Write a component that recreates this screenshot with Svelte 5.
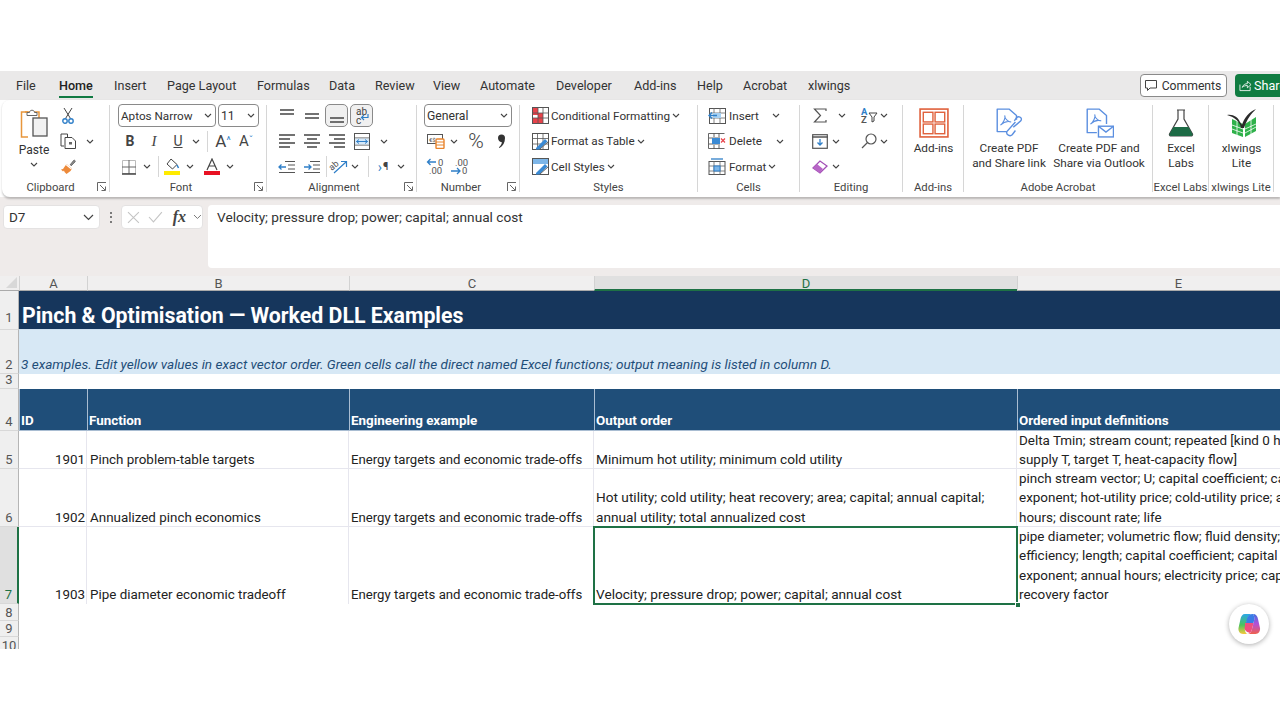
<script>
  const tabs = ['File','Home','Insert','Page Layout','Formulas','Data','Review','View','Automate','Developer','Add-ins','Help','Acrobat','xlwings'];
  const cols = ['A','B','C','D','E'];
  const filler = [8,9,10];
</script>

{#snippet chev()}
  <svg class="chev" width="8" height="5" viewBox="0 0 8 5"><path d="M1 1l3 3 3-3" fill="none" stroke="#444" stroke-width="1.1"/></svg>
{/snippet}
{#snippet launcher()}
  <svg class="launcher" width="10" height="10" viewBox="0 0 10 10"><path d="M.5 9V.5H9M3 3l5 5M8.500 4.500v4h-4" fill="none" stroke="#666"/></svg>
{/snippet}
{#snippet lines(a, b, c, d)}
  <svg width="20" height="18" viewBox="0 0 20 18"><g stroke="#444" stroke-width="1.3"><path d="M{a[0]} 3H{a[1]}M{b[0]} 7H{b[1]}M{c[0]} 11H{c[1]}M{d[0]} 15H{d[1]}"/></g></svg>
{/snippet}

<div class="page">
  <div class="tabs">
    <nav class="tablist">
      {#each tabs as t}
        <span class="tab" class:active={t === 'Home'}>{t}</span>
      {/each}
    </nav>
    <div class="actions">
      <button class="comments">
        <svg width="14" height="13" viewBox="0 0 14 13"><path d="M1.500 1.500h11v7.500H6l-2.500 2.500V9h-2z" fill="none" stroke="#444"/></svg>
        Comments
      </button>
      <button class="share">
        <svg width="13" height="13" viewBox="0 0 14 13"><path d="M1 5.500v6.500h11V8M3.500 8.500C4.500 5.500 7 4.500 9 4.500V2l4 3.500-4 3.500V6.500c-2 0-4 .5-5.500 2z" fill="none" stroke="#fff" stroke-width=".9"/></svg>
        Share
      </button>
    </div>
  </div>

  <div class="ribbon">
    <section class="group g-clip">
      <div class="body">
        <div class="large paste">
          <svg width="30" height="30" viewBox="0 0 30 30"><path d="M9 4H2.500v25H9" fill="#fff" stroke="#e8963c" stroke-width="1.500"/><path d="M6 4h14v6" fill="none" stroke="#e8963c" stroke-width="1.500"/><path d="M8 4.500h2.500c0-3 5-3 5 0H18v3H8z" fill="#fff" stroke="#666"/><rect x="14" y="10" width="14" height="18" fill="#f2f2f2" stroke="#555" stroke-width="1.300"/></svg>
          <span class="btn-text">Paste</span>
          {@render chev()}
        </div>
        <div class="stack">
          <div class="row">
            <span class="c w18"><svg width="12" height="17" viewBox="0 0 12 17"><path d="M2 1l6.500 10.500M10 1L3.500 11.500" stroke="#444" fill="none"/><circle cx="3" cy="14" r="2.200" fill="none" stroke="#2f7fc8" stroke-width="1.400"/><circle cx="9" cy="14" r="2.200" fill="none" stroke="#2f7fc8" stroke-width="1.400"/></svg></span>
          </div>
          <div class="row">
            <span class="c w18"><svg width="17" height="16" viewBox="0 0 17 16"><path d="M4 13H1V1h6.500v3" fill="none" stroke="#444"/><path d="M5 4.500h7l3.500 3.500v7.500H5z" fill="#fff" stroke="#444"/><rect x="9" y="9" width="3" height="2.500" fill="#666"/></svg></span>
            <span class="c w26">{@render chev()}</span>
          </div>
          <div class="row">
            <span class="c w18"><svg width="17" height="16" viewBox="0 0 17 16"><path d="M10 6l3.500-4.500c1-1 2.500.5 1.500 1.500L11 7" fill="#888" stroke="#555" stroke-width=".7"/><path d="M6.500 5l5.500 4.500-1.500 2.500-4 3-2-2-.5-1.500-1 1L1 10.500l2-.5z" fill="#ed8a3a"/><path d="M6 5.500l5.500 4.500" stroke="#fff" stroke-width="1.100"/></svg></span>
          </div>
        </div>
      </div>
      <div class="label">Clipboard</div>
      {@render launcher()}
    </section>

    <section class="group g-font">
      <div class="stack">
        <div class="row combos">
          <div class="combo fontname"><span>Aptos Narrow</span>{@render chev()}</div>
          <div class="combo fontsize"><span>11</span>{@render chev()}</div>
        </div>
        <div class="row">
          <span class="c w24 glyph bold">B</span>
          <span class="c w24 glyph ital">I</span>
          <span class="c w24 glyph under">U</span>
          <span class="c w12">{@render chev()}</span>
          <span class="c w10"><i class="sep"></i></span>
          <span class="c w22 glyph large-a">A<sup class="up">^</sup></span>
          <span class="c w24 glyph small-a">A<sup class="dn">ˇ</sup></span>
        </div>
        <div class="row">
          <span class="c w22"><svg width="16" height="16" viewBox="0 0 16 16"><path d="M1.500 1.500h13v13h-13z" fill="none" stroke="#bbb"/><path d="M8 1v14M1 8h14" stroke="#666"/><path d="M1 15h14" stroke="#444" stroke-width="1.500"/></svg></span>
          <span class="c w14">{@render chev()}</span>
          <span class="c w8"><i class="sep"></i></span>
          <span class="c w20"><svg width="16" height="17" viewBox="0 0 16 17"><path d="M7 1l6 5.500-4.500 4.500L3 6z" fill="#fff" stroke="#444"/><path d="M13 7l1.500 3" stroke="#2f7fc8" stroke-width="1.500"/><rect y="13" width="16" height="4" fill="#ffeb00"/></svg></span>
          <span class="c w16">{@render chev()}</span>
          <span class="c w28"><svg width="16" height="17" viewBox="0 0 16 17"><path d="M3 12L8 1l5 11M5 8h6" fill="none" stroke="#444" stroke-width="1.200"/><rect y="13" width="16" height="4" fill="#e81123"/></svg></span>
          <span class="c w8">{@render chev()}</span>
        </div>
      </div>
      <div class="label">Font</div>
      {@render launcher()}
    </section>

    <section class="group g-align">
      <div class="stack">
        <div class="row">
          <span class="c w25">{@render lines([3,17],[3,17],[30,30],[30,30])}</span>
          <span class="c w25">{@render lines([30,30],[3,17],[3,17],[30,30])}</span>
          <span class="c w25 on">{@render lines([30,30],[30,30],[3,17],[3,17])}</span>
          <span class="c w25 on wrap"><span class="abc">ab<br/>c</span><svg class="wraparrow" width="9" height="8" viewBox="0 0 9 8"><path d="M8 0v3.500H2M4 1L1.500 3.500 4 6" fill="none" stroke="#2f7fc8" stroke-width="1.200"/></svg></span>
        </div>
        <div class="row">
          <span class="c w25">{@render lines([2,18],[2,13],[2,18],[2,13])}</span>
          <span class="c w25">{@render lines([2,18],[5,15],[2,18],[5,15])}</span>
          <span class="c w25">{@render lines([2,18],[7,18],[2,18],[7,18])}</span>
          <span class="c w25"><svg width="16" height="17" viewBox="0 0 16 17"><rect x=".5" y=".5" width="15" height="16" fill="#fff" stroke="#555"/><path d="M0 5h16M0 12h16" stroke="#555"/><rect x="1" y="5.500" width="14" height="6" fill="#d5e8f8"/><path d="M2.500 8.500h11M5 6.500l-2.500 2 2.500 2M11 6.500l2.500 2-2.500 2" fill="none" stroke="#2f7fc8"/></svg></span>
          <span class="c w20">{@render chev()}</span>
        </div>
        <div class="row">
          <span class="c w25"><svg width="20" height="16" viewBox="0 0 20 16"><path d="M8 2.500h10M11 6h7M11 10h7M2 13.500h16" stroke="#555" stroke-width="1.200"/><path d="M9 8H2M4.500 5.500L2 8l2.500 2.500" fill="none" stroke="#2f7fc8" stroke-width="1.300"/></svg></span>
          <span class="c w25"><svg width="20" height="16" viewBox="0 0 20 16"><path d="M8 2.500h10M11 6h7M11 10h7M2 13.500h16" stroke="#555" stroke-width="1.200"/><path d="M2 8h7M6.500 5.500L9 8l-2.500 2.500" fill="none" stroke="#2f7fc8" stroke-width="1.300"/></svg></span>
          <span class="c w4"><i class="sep"></i></span>
          <span class="c w20"><svg width="19" height="17" viewBox="0 0 19 17"><text x="1" y="10" transform="rotate(-40 6 9)" class="svgt">ab</text><path d="M5 15L17 4M12 3.500h5.500V9" fill="none" stroke="#2f7fc8" stroke-width="1.200"/></svg></span>
          <span class="c w14">{@render chev()}</span>
          <span class="c w12"><i class="sep"></i></span>
          <span class="c w18 rtl"><b>›</b>¶</span>
          <span class="c w18">{@render chev()}</span>
        </div>
      </div>
      <div class="label">Alignment</div>
      {@render launcher()}
    </section>

    <section class="group g-num">
      <div class="stack">
        <div class="row"><div class="combo general"><span>General</span>{@render chev()}</div></div>
        <div class="row">
          <span class="c w24"><svg width="18" height="16" viewBox="0 0 18 16"><rect x=".5" y="1.500" width="15" height="9" fill="none" stroke="#555"/><text x="2" y="9" class="svgt tiny">€$</text><rect x="9" y="6" width="8" height="9.500" rx="1" fill="#fff" stroke="#e8842c" stroke-width="1.400"/><path d="M9 9h8M9 12h8" stroke="#e8842c"/></svg></span>
          <span class="c w12">{@render chev()}</span>
          <span class="c w32 pct">%</span>
          <span class="c w18"><svg width="9" height="15" viewBox="0 0 9 15"><path d="M1 4a3.500 3.500 0 1 1 7 0c0 4.500-2 8-5.500 10l-.6-.8c1.700-1.300 2.700-2.900 3-5C2.700 8.300 1 6.300 1 4z" fill="#333"/></svg></span>
        </div>
        <div class="row">
          <span class="c w24"><svg width="21" height="17" viewBox="0 0 21 17"><path d="M10 4H1.500M4.500 1L1.500 4l3 3" fill="none" stroke="#2f7fc8" stroke-width="1.300"/><text x="12" y="8" class="svgt num">0</text><text x="3" y="16" class="svgt num">.00</text></svg></span>
          <span class="c w24"><svg width="21" height="17" viewBox="0 0 21 17"><text x="5" y="8" class="svgt num">.00</text><path d="M1 13h9M7 10l3 3-3 3" fill="none" stroke="#2f7fc8" stroke-width="1.300"/><text x="12" y="16" class="svgt num">0</text></svg></span>
        </div>
      </div>
      <div class="label">Number</div>
      {@render launcher()}
    </section>

    <section class="group g-styles">
      <div class="stack">
        <div class="row"><span class="c w18"><svg width="17" height="17" viewBox="0 0 17 17"><rect x=".5" y=".5" width="16" height="16" fill="#fff" stroke="#555"/><rect x="1" y="1" width="5" height="7" fill="#e8434b"/><rect x="6" y="6" width="5" height="5" fill="#e8434b"/><rect x="1" y="11" width="10" height="5" fill="#e8434b"/><path d="M6 0v17M11 0v17M0 6h17M0 11h17" stroke="#555" stroke-width=".8"/></svg></span><span class="tx">Conditional Formatting</span><span class="cv">{@render chev()}</span></div>
        <div class="row"><span class="c w18"><svg width="17" height="17" viewBox="0 0 17 17"><rect x=".5" y=".5" width="16" height="16" fill="#fff" stroke="#555"/><path d="M0 5.500h17M0 11h17M5.500 0v17M11 0v17" stroke="#555" stroke-width=".8"/><path d="M4 15l9-9 2.500 2.500-8 8H4z" fill="#3a8ad4"/><path d="M8 16l8-7" stroke="#666"/></svg></span><span class="tx">Format as Table</span><span class="cv">{@render chev()}</span></div>
        <div class="row"><span class="c w18"><svg width="17" height="17" viewBox="0 0 17 17"><rect x=".5" y=".5" width="16" height="16" fill="#fff" stroke="#555"/><rect x="1" y="1" width="15" height="5" fill="#7db6e8"/><path d="M4 15l9-9 2.500 2.500-8 8H4z" fill="#3a8ad4"/><path d="M8 16l8-7" stroke="#666"/></svg></span><span class="tx">Cell Styles</span><span class="cv">{@render chev()}</span></div>
      </div>
      <div class="label">Styles</div>
    </section>

    <section class="group g-cells">
      <div class="stack">
        <div class="row"><span class="c w18"><svg width="18" height="16" viewBox="0 0 18 16"><rect x="1.500" y=".5" width="16" height="15" fill="#fff" stroke="#555"/><path d="M6 0v16M12 0v16M1 5h17M1 10h17" stroke="#666" stroke-width=".8"/><rect x="5" y="5" width="8" height="5" fill="#a6d0f2"/><path d="M9 7.500H1M4 4.500L1 7.500l3 3" fill="none" stroke="#2f7fc8" stroke-width="1.300"/></svg></span><span class="tx t-ins">Insert</span><span class="cv">{@render chev()}</span></div>
        <div class="row"><span class="c w18"><svg width="18" height="16" viewBox="0 0 18 16"><path d="M.5 .5h16M.5 15.500h16M.5 .5v15M6 0v4M6 12v4M11 0v4M11 12v4M1 5h11M1 11h11" stroke="#555" fill="none" stroke-width=".9"/><rect x="4" y="5" width="8" height="6" fill="#3a8ad4"/><path d="M13 5.500l4 4M17 5.500l-4 4" stroke="#e8434b" stroke-width="1.200"/></svg></span><span class="tx t-del">Delete</span><span class="cv">{@render chev()}</span></div>
        <div class="row"><span class="c w18"><svg width="18" height="17" viewBox="0 0 18 17"><rect x="1" y="3.500" width="16" height="13" fill="#fff" stroke="#555"/><path d="M6 3v14M12 3v14M1 8h16M1 13h16" stroke="#666" stroke-width=".8"/><rect x="6" y="8" width="6" height="5" fill="#7db6e8" stroke="#2f7fc8"/><path d="M3 1h12" stroke="#2f7fc8" stroke-width="1.300"/></svg></span><span class="tx t-fmt">Format</span><span class="cv">{@render chev()}</span></div>
      </div>
      <div class="label">Cells</div>
    </section>

    <section class="group g-edit">
      <div class="stack">
        <div class="row">
          <span class="c w24"><svg width="14" height="15" viewBox="0 0 14 15"><path d="M13 3V1H1.500L7.500 7.500 1.500 14H13v-2" fill="none" stroke="#555" stroke-width="1.200"/></svg></span>
          <span class="c w20">{@render chev()}</span>
          <span class="c w6"></span>
          <span class="c w22"><svg width="18" height="17" viewBox="0 0 18 17"><text x="1" y="8" class="svgt az blue">A</text><text x="1" y="16" class="svgt az">Z</text><path d="M9 6h8l-3 4v4l-2 1v-5z" fill="none" stroke="#444"/></svg></span>
          <span class="c w8">{@render chev()}</span>
        </div>
        <div class="row">
          <span class="c w24"><svg width="16" height="15" viewBox="0 0 16 15"><rect x=".7" y=".7" width="14.600" height="13.600" fill="#fff" stroke="#555" stroke-width="1.200"/><path d="M0 3h16" stroke="#555" stroke-width="1.500"/><path d="M8 5v6M5.500 8.500L8 11l2.500-2.500" fill="none" stroke="#2f7fc8" stroke-width="1.300"/></svg></span>
          <span class="c w8">{@render chev()}</span>
          <span class="c w18"></span>
          <span class="c w22"><svg width="16" height="16" viewBox="0 0 16 16"><circle cx="10" cy="6" r="5" fill="none" stroke="#555" stroke-width="1.200"/><path d="M6.500 9.500L1 15" stroke="#555" stroke-width="1.300"/></svg></span>
          <span class="c w8">{@render chev()}</span>
        </div>
        <div class="row">
          <span class="c w24"><svg width="16" height="14" viewBox="0 0 16 14"><path d="M1 8l7-7 7 5-7 7z" fill="#fff" stroke="#a24fb5" stroke-width="1.300"/><path d="M1 8l4-4 6 5-3 4z" fill="#b765c6"/></svg></span>
          <span class="c w8">{@render chev()}</span>
        </div>
      </div>
      <div class="label">Editing</div>
    </section>

    <section class="group g-addins">
      <div class="large">
        <svg class="bigicon" width="30" height="30" viewBox="0 0 28 28"><rect x="1" y="1" width="26" height="26" fill="none" stroke="#e0613c" stroke-width="1.500"/><g fill="none" stroke="#e0613c" stroke-width="1.300"><rect x="4" y="4" width="9" height="9"/><rect x="15" y="4" width="9" height="9"/><rect x="4" y="15" width="9" height="9"/><rect x="15" y="15" width="9" height="9"/></g></svg>
        <span class="btn-text">Add-ins</span>
      </div>
      <div class="label">Add-ins</div>
    </section>

    <section class="group g-acro">
      <div class="body">
        <div class="large acro-btn">
          <svg class="bigicon" width="30" height="30" viewBox="0 0 28 28"><path d="M12 22H3V1h11l7 6v4" fill="#fff" stroke="#5b8fe0" stroke-width="1.300" stroke-linejoin="round"/><path d="M6 16c3-2 5-7 4-9 0 3 3 6 6 6-3-1-7 0-10 3z" fill="none" stroke="#5b8fe0"/><path d="M20 13l-8 9c-1 3 3 5 5 3l3-4M18 18l7-6c2-3-2-5-4-3l-2 3" fill="none" stroke="#5b8fe0" stroke-width="1.300"/></svg>
          <span class="btn-text">Create PDF<br/>and Share link</span>
        </div>
        <div class="large acro-btn">
          <svg class="bigicon" width="30" height="30" viewBox="0 0 28 28"><path d="M12 23H3V1h11l7 6v8" fill="#fff" stroke="#5b8fe0" stroke-width="1.300" stroke-linejoin="round"/><path d="M6 15c3-2 5-7 4-9 0 3 3 6 6 6-3-1-7 0-10 3z" fill="none" stroke="#5b8fe0"/><rect x="13.500" y="17" width="14" height="10" fill="#fff" stroke="#5b8fe0" stroke-width="1.300"/><path d="M13.500 17l7 5.500 7-5.500" fill="none" stroke="#5b8fe0" stroke-width="1.300"/></svg>
          <span class="btn-text">Create PDF and<br/>Share via Outlook</span>
        </div>
      </div>
      <div class="label">Adobe Acrobat</div>
    </section>

    <section class="group g-labs">
      <div class="large">
        <svg class="bigicon" width="26" height="28" viewBox="0 0 26 28"><path d="M9 1h8M10 1v9L1.500 25c-.5 1 .5 2 1.500 2h20c1 0 2-1 1.500-2L16 10V1" fill="none" stroke="#444" stroke-width="1.200"/><path d="M5.500 18h15l4 7c.5 1-.5 2-1.500 2H3c-1 0-2-1-1.500-2z" fill="#1d6b46"/></svg>
        <span class="btn-text">Excel<br/>Labs</span>
      </div>
      <div class="label">Excel Labs</div>
    </section>

    <section class="group g-xl">
      <div class="large">
        <svg class="bigicon" width="32" height="30" viewBox="0 0 32 30"><path d="M6 11l11 5v13L6 25z" fill="#2fb14a"/><path d="M30 9L19 16v13l11-6z" fill="#2fb14a"/><path d="M6 17l11 4M6 21l11 4M19 21l11-5M19 25l11-6M11 13v14M25 12v14" stroke="#fff" stroke-width=".8" fill="none"/><path d="M1 7c6-1 11 2 13 7l2 3c2-7 7-13 14-16-5 5-9 10-12 19h-3c-1-6-6-11-14-13z" fill="#2b2b2b"/></svg>
        <span class="btn-text">xlwings<br/>Lite</span>
      </div>
      <div class="label">xlwings Lite</div>
    </section>
  </div>

  <div class="formula">
    <div class="namebox"><span>D7</span><svg width="11" height="7" viewBox="0 0 11 7"><path d="M1 1l4.500 4.500L10 1" fill="none" stroke="#444" stroke-width="1.200"/></svg></div>
    <span class="dots"><i></i><i></i><i></i></span>
    <div class="fxbox">
      <svg width="13" height="13" viewBox="0 0 13 13"><path d="M1 1l11 11M12 1L1 12" stroke="#c4c4c4" stroke-width="1.100"/></svg>
      <svg width="15" height="12" viewBox="0 0 15 12"><path d="M1 6l4.500 5L14 1" fill="none" stroke="#c4c4c4" stroke-width="1.100"/></svg>
      <span class="fx">fx</span>
      <svg width="9" height="6" viewBox="0 0 9 6"><path d="M1 1l3.500 3.500L8 1" fill="none" stroke="#777"/></svg>
    </div>
    <div class="input">Velocity; pressure drop; power; capital; annual cost</div>
  </div>

  <div class="sheet">
    <div class="corner"><svg width="11" height="11" viewBox="0 0 11 11"><path d="M11 0v11H0z" fill="#d8d8d8"/></svg></div>
    {#each cols as c}
      <div class="colhead" class:sel={c === 'D'}>{c}</div>
    {/each}

    <div class="rowhead first">1</div>
    <div class="title span5">Pinch &amp; Optimisation — Worked DLL Examples</div>

    <div class="rowhead">2</div>
    <div class="note span5">3 examples. Edit yellow values in exact vector order. Green cells call the direct named Excel functions; output meaning is listed in column D.</div>

    <div class="rowhead">3</div>
    <div class="blank span5"></div>

    <div class="rowhead">4</div>
    <div class="hd">ID</div>
    <div class="hd">Function</div>
    <div class="hd">Engineering example</div>
    <div class="hd">Output order</div>
    <div class="hd">Ordered input definitions</div>

    <div class="rowhead">5</div>
    <div class="cell num">1901</div>
    <div class="cell fn">Pinch problem-table targets</div>
    <div class="cell eg">Energy targets and economic trade-offs</div>
    <div class="cell out">Minimum hot utility; minimum cold utility</div>
    <div class="cell defs">Delta Tmin; stream count; repeated [kind 0 hot/1 cold,<br/>supply T, target T, heat-capacity flow]</div>

    <div class="rowhead">6</div>
    <div class="cell num">1902</div>
    <div class="cell fn">Annualized pinch economics</div>
    <div class="cell eg">Energy targets and economic trade-offs</div>
    <div class="cell out">Hot utility; cold utility; heat recovery; area; capital; annual capital;<br/>annual utility; total annualized cost</div>
    <div class="cell defs">pinch stream vector; U; capital coefficient; capital<br/>exponent; hot-utility price; cold-utility price; annual<br/>hours; discount rate; life</div>

    <div class="rowhead sel">7</div>
    <div class="cell num last">1903</div>
    <div class="cell fn last">Pipe diameter economic tradeoff</div>
    <div class="cell eg last">Energy targets and economic trade-offs</div>
    <div class="cell out active">Velocity; pressure drop; power; capital; annual cost<i class="handle"></i></div>
    <div class="cell defs last">pipe diameter; volumetric flow; fluid density; pump<br/>efficiency; length; capital coefficient; capital<br/>exponent; annual hours; electricity price; capital<br/>recovery factor</div>

    {#each filler as n}
      <div class="rowhead small">{n}</div>
      <div class="span5 empty"></div>
    {/each}

    <button class="copilot" aria-label="Copilot">
      <svg width="24" height="22" viewBox="0 0 24 22">
        <defs>
          <linearGradient id="cpa" x1="0" y1="0" x2="0" y2="1"><stop offset="0" stop-color="#2aa7e8"/><stop offset=".55" stop-color="#4cc45c"/><stop offset="1" stop-color="#f6c83c"/></linearGradient>
          <linearGradient id="cpb" x1="0" y1="0" x2="0" y2="1"><stop offset="0" stop-color="#3f6fe0"/><stop offset=".5" stop-color="#b44fd8"/><stop offset="1" stop-color="#f0604c"/></linearGradient>
        </defs>
        <path d="M8 1h6c-2 1-3 3-3.500 5L8 15c-.5 2 0 4 2 6H6c-3 0-5-3-4.500-6l2-9C4 3 5.500 1 8 1z" fill="url(#cpa)"/>
        <path d="M16 1c3 0 4.500 2 5 5l2 9c.5 3-1.500 6-4.500 6H10c3 0 4.500-2 5-5l2-8c.5-2 .5-5-1-7z" fill="url(#cpb)"/>
        <path d="M10 5.500C11 3 12.500 1 16 1c1.500 2 1.500 5 1 7l-1 3.500H8.500z" fill="#3a7ce6"/>
        <path d="M8 10h8.500l-1.500 6c-.4 1.600-1 3-2 4-1.500-.5-4-1-5.200-3.500-.3-1.500-.2-2.500.2-3.500z" fill="#ef4f7e"/>
      </svg>
    </button>
  </div>
</div>

<style>
  :global(body) { margin: 0; background: #fff; }
  .page { width: 1280px; height: 720px; overflow: hidden; font-family: Roboto, "Noto Sans", sans-serif; color: #333; background: #fff; }
  button { font: inherit; cursor: default; }

  .tabs { margin-top: 71px; height: 29px; background: #eae9e9; display: flex; align-items: center; justify-content: space-between; }
  .tablist { display: grid; grid-template-columns: 43px 55px 53px 90px 72px 46px 58px 47px 76px 78px 63px 46px 65px auto; justify-items: start; padding-left: 16px; font-size: 12.6px; }
  .tab { position: relative; line-height: 29px; color: #333; white-space: nowrap; }
  .tab.active { color: #222; font-weight: 500; }
  .tab.active::after { content: ""; position: absolute; left: 0; right: 0; bottom: 2px; height: 2px; background: #117a43; }
  .actions { display: flex; gap: 8px; width: 140px; flex: none; align-items: center; }
  .comments { flex: none; width: 87px; height: 23px; display: flex; align-items: center; justify-content: center; gap: 4px; padding: 0 2px 0 0; background: #fff; border: 1px solid #8a8a8a; border-radius: 4px; font-size: 12.2px; color: #333; }
  .share { flex: none; width: 60px; height: 23px; display: flex; align-items: center; gap: 2px; padding: 0 0 0 4px; background: #107c41; border: 0; border-radius: 4px; color: #fff; font-size: 12.6px; }

  .ribbon { display: flex; height: 97px; margin-left: 2px; background: #fff; border-radius: 8px 0 0 8px; box-shadow: 0 1.500px 2px rgba(0,0,0,.22); position: relative; font-size: 11.7px; }
  .group { position: relative; flex: none; box-sizing: border-box; display: flex; flex-direction: column; padding-top: 3px; }
  .group::after { content: ""; position: absolute; right: 0; top: 5px; bottom: 5px; width: 1px; background: #d6d6d6; }
  .label { position: absolute; left: 0; right: 1px; bottom: 1px; text-align: center; font-size: 11.3px; line-height: 16px; color: #444; white-space: nowrap; }
  .g-clip .label { right: 11px; }
  .g-font .label { right: 15px; }
  .g-align .label { right: 16px; }
  .g-num .label { right: 15px; }
  .launcher { position: absolute; right: 3px; bottom: 5px; }
  .body { display: flex; }
  .stack { display: flex; flex-direction: column; }
  .row { display: flex; align-items: center; height: 25.5px; white-space: nowrap; }

  .g-clip { width: 108px; padding-left: 10px; }
  .g-font { width: 157px; padding-left: 8px; }
  .g-align { width: 150px; padding-left: 7px; }
  .g-num { width: 103px; padding-left: 7px; }
  .g-styles { width: 178px; padding-left: 11px; }
  .g-cells { width: 102px; padding-left: 10px; }
  .g-edit { width: 103px; padding-left: 8px; }
  .g-addins { width: 61px; }
  .g-acro { width: 189px; }
  .g-labs { width: 56px; }
  .g-xl { width: 65px; }

  .large { display: flex; flex-direction: column; align-items: center; font-size: 11.8px; line-height: 15px; text-align: center; color: #333; white-space: nowrap; }
  .paste { width: 44px; padding-top: 5px; font-size: 12px; }
  .paste svg:first-child { margin-bottom: 5px; }
  .paste .chev { margin-top: 4px; }
  .g-clip .stack { margin-left: 3px; }
  .bigicon { height: 30px; margin: 5px 0 3px; }
  .acro-btn { width: 90px; }

  .c { display: flex; align-items: center; justify-content: center; flex: none; height: 25px; }
  .w4 { width: 4px; } .w6 { width: 6px; } .w8 { width: 8px; } .w10 { width: 10px; } .w12 { width: 12px; } .w14 { width: 14px; } .w16 { width: 16px; } .w18 { width: 18px; } .w20 { width: 20px; } .w22 { width: 22px; } .w24 { width: 24px; } .w25 { width: 25px; } .w26 { width: 26px; } .w28 { width: 28px; } .w32 { width: 32px; }
  .sep { display: block; width: 1px; height: 21px; background: #d6d6d6; }

  .combo { box-sizing: border-box; height: 23px; background: #fff; border: 1px solid #8a8a8a; border-radius: 4px; display: flex; align-items: center; justify-content: space-between; padding: 0 3px 0 2px; font-size: 12.2px; color: #333; }
  .fontname { width: 98px; font-size: 11.7px; } .fontsize { width: 41px; } .general { width: 88px; }
  .combos { gap: 2px; }

  .glyph { color: #444; }
  .bold { font-weight: 700; font-size: 14px; }
  .ital { font-style: italic; font-size: 15px; font-family: "Liberation Serif", serif; }
  .under { text-decoration: underline; font-size: 14px; }
  .large-a { font-size: 17px; }
  .small-a { font-size: 15px; }
  sup { font-size: 10px; line-height: 0; vertical-align: 6px; }
  .up, .dn { color: #2f7fc8; }

  .on { box-sizing: border-box; height: 23px; width: 23px; margin: 0 1px; background: #f0f0f0; border: 1px solid #8a8a8a; border-radius: 5px; }
  .wrap { position: relative; }
  .abc { font-size: 10px; line-height: 9px; color: #444; width: 100%; padding-left: 5px; }
  .wraparrow { position: absolute; right: 3px; bottom: 4px; }
  .rtl { font-size: 11px; color: #444; } .rtl b { color: #2f7fc8; font-size: 14px; font-weight: 400; margin-right: 1px; }
  .pct { font-size: 21px; font-weight: 300; color: #444; }
  .svgt { font-family: Roboto, sans-serif; font-size: 9px; fill: #555; }
  .svgt.tiny { font-size: 6px; }
  .svgt.num { font-size: 9.500px; }
  .svgt.az { font-size: 9.500px; font-weight: 700; }
  .svgt.blue { fill: #2f7fc8; }

  .tx { color: #333; margin-left: 2px; font-size: 11.7px; }
  .cv { margin-left: 2px; display: flex; }
  .g-cells .tx { margin-left: 3px; }
  .g-cells .t-ins { width: 39px; }
  .g-cells .t-del { width: 43px; }
  .g-cells .t-fmt { width: 37px; }
  .g-cells .cv { margin-left: 4px; }
  .g-cells .row:last-child .cv { margin-left: 2px; }

  .formula { height: 63px; padding: 8px 0; background: #efebea; display: flex; align-items: flex-start; }
  .namebox { box-sizing: border-box; margin-left: 3px; width: 97px; height: 24px; background: #fff; border-radius: 4px; border: 1px solid #e4e2e2; display: flex; align-items: center; justify-content: space-between; padding: 0 5px; font-size: 13.5px; color: #333; }
  .dots { width: 21px; height: 24px; display: flex; flex-direction: column; align-items: center; justify-content: center; gap: 2.500px; }
  .dots i { display: block; width: 2px; height: 2px; background: #555; border-radius: 50%; }
  .fxbox { box-sizing: border-box; width: 82px; height: 24px; background: #fff; border-radius: 4px; border: 1px solid #e4e2e2; display: flex; align-items: center; gap: 8px; padding-left: 5px; margin-right: 5px; }
  .fx { font-family: "Liberation Serif", serif; font-style: italic; font-weight: 700; font-size: 16px; color: #444; margin: 0 -1px 0 2px; }
  .input { box-sizing: border-box; flex: 1; height: 63px; background: #fff; border-radius: 4px 0 0 4px; padding: 2px 0 0 9px; font-size: 13.650px; line-height: 20px; color: #333; }

  .sheet { position: relative; height: 373px; display: grid; grid-template-columns: 19px 68px 262px 245px 423px 322px; grid-template-rows: 15px 39px 44px 15px 42px 38px 58px 77px 16.500px 16.500px 16.500px; overflow: hidden; font-size: 13.400px; line-height: 19.400px; color: #222; background: #fff; }
  .corner { background: #f0efef; display: flex; align-items: flex-end; justify-content: flex-end; padding: 0 2px 2px 0; border-bottom: 1px solid #aaa; box-sizing: border-box; }
  .colhead { box-sizing: border-box; background: #f0efef; border-left: 1px solid #d2d2d2; border-bottom: 1px solid #aaa; text-align: center; font-size: 13px; line-height: 15px; color: #555; }
  .colhead.sel { background: #e0e0e0; color: #1e7145; border-bottom: 2px solid #1e7145; }
  .rowhead { box-sizing: border-box; background: #efefef; border-bottom: 1px solid #d8d8d8; border-right: 1px solid #b5b5b5; display: flex; align-items: flex-end; justify-content: center; font-size: 13px; line-height: 16px; color: #555; }
  .rowhead.first { padding-bottom: 3px; }
  .rowhead.sel { background: #e0e0e0; color: #1e7145; border-right: 2px solid #1e7145; }
  .rowhead.small { line-height: 14px; }
  .span5 { grid-column: 2 / -1; }
  .title { background: #16365c; color: #fff; font-weight: 700; font-size: 21.300px; line-height: 25px; padding: 12px 0 0 3px; box-sizing: border-box; border-bottom: 1px solid #cfe0ef; white-space: nowrap; }
  .note { background: #d7e8f5; color: #1f4e79; font-style: italic; font-size: 13.550px; display: flex; align-items: flex-end; padding: 0 0 0 2px; white-space: nowrap; }
  .blank, .empty { background: #fff; }
  .hd { box-sizing: border-box; background: #1f4e79; color: #fff; font-weight: 700; display: flex; align-items: flex-end; padding: 0 0 0 1px; border-left: 1px solid #a9bdd2; border-bottom: 1px solid #a9bdd2; white-space: nowrap; overflow: hidden; }
  .cell { box-sizing: border-box; box-shadow: inset -1px -1px 0 #e6e6ee; padding: 0 0 0 2px; display: block; align-content: end; white-space: nowrap; overflow: hidden; }
  .cell.last { box-shadow: inset -1px 0 0 #e6e6ee; }
  .cell.fn { padding-left: 3px; }
  .cell.eg { font-size: 13.200px; }
  .cell.out { font-size: 13.650px; }
  .cell.defs { font-size: 13.450px; }
  .cell.num { text-align: right; padding: 0 2px 0 0; }
  .cell.active { position: relative; overflow: visible; box-shadow: none; outline: 2px solid #1e7145; outline-offset: -1px; z-index: 2; }
  .handle { position: absolute; right: -4px; bottom: -4px; width: 6px; height: 6px; background: #1e7145; border: 1px solid #fff; box-sizing: border-box; }
  .copilot { position: absolute; left: 1229px; top: 328px; width: 40px; height: 40px; padding: 0; border: 0; border-radius: 50%; background: #fff; box-shadow: 0 1px 5px rgba(0,0,0,.32); display: flex; align-items: center; justify-content: center; z-index: 3; }
</style>
